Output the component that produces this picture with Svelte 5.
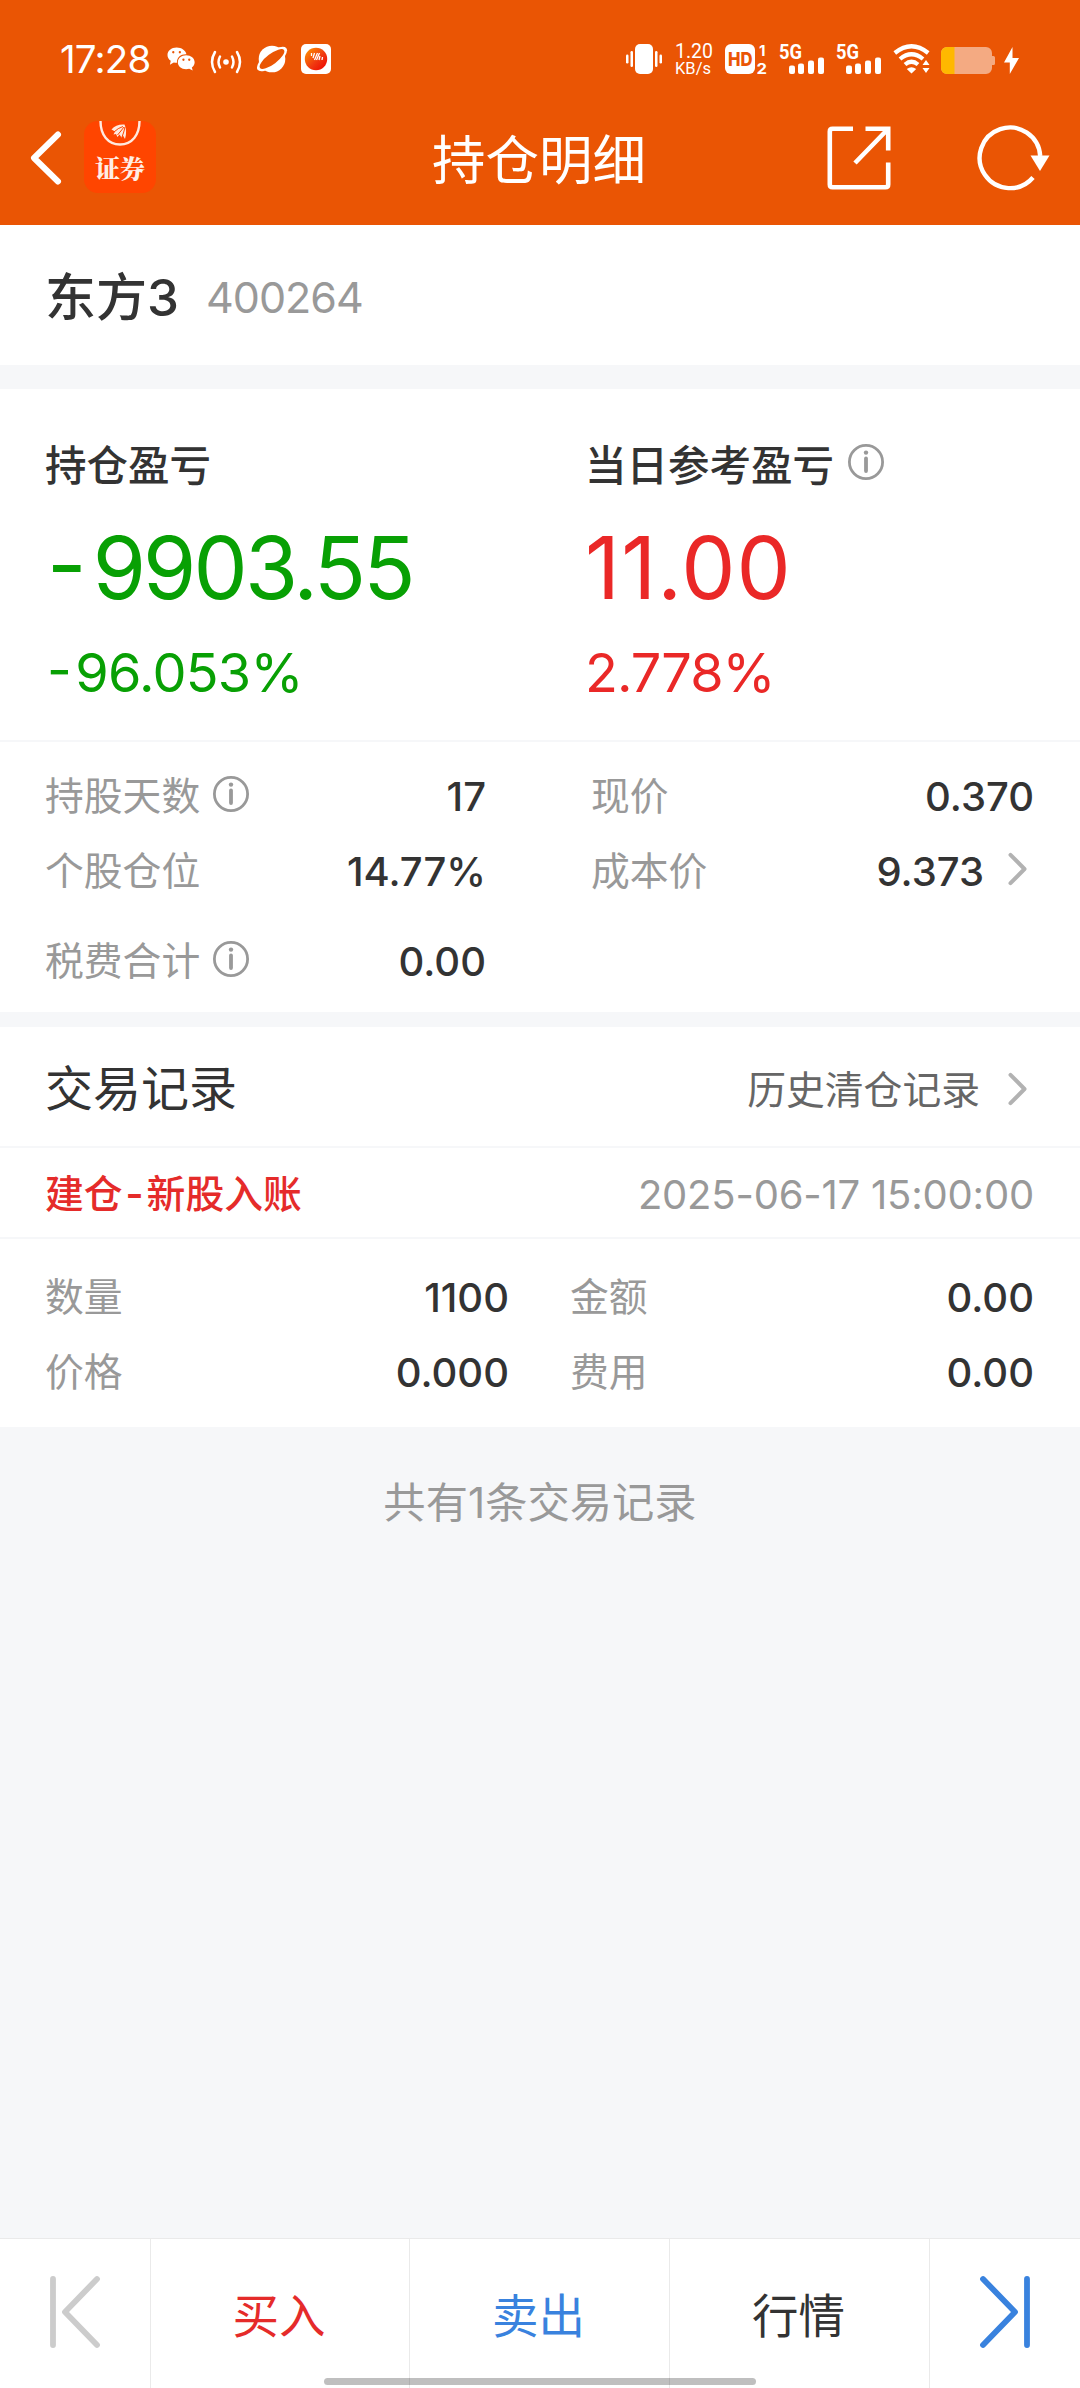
<script>
  const profits = [
    { title: '持仓盈亏', value: '-9903.55', pct: '-96.053%', tone: 'down' },
    { title: '当日参考盈亏', value: '11.00', pct: '2.778%', tone: 'up', info: true }
  ];
  const leftDetails = [
    { label: '持股天数', value: '17', info: true },
    { label: '个股仓位', value: '14.77%' },
    { label: '税费合计', value: '0.00', info: true }
  ];
  const rightDetails = [
    { label: '现价', value: '0.370' },
    { label: '成本价', value: '9.373', more: true }
  ];
  const record = [
    { label: '数量', value: '1100' },
    { label: '金额', value: '0.00' },
    { label: '价格', value: '0.000' },
    { label: '费用', value: '0.00' }
  ];
</script>

{#snippet infoIcon()}
  <svg class="info" width="38" height="38" viewBox="0 0 38 38">
    <circle cx="19" cy="19" r="16.6" fill="none" stroke="#999" stroke-width="2.8" />
    <circle cx="19" cy="9.6" r="2.2" fill="#999" />
    <path d="M19 15.5V28" stroke="#999" stroke-width="3.8" stroke-linecap="round" />
  </svg>
{/snippet}

{#snippet more()}
  <svg class="more" width="20" height="34" viewBox="0 0 20 34">
    <path d="M2.5 2.8L16.500 17L2.5 31.2" fill="none" stroke="#b2b2b2" stroke-width="4" stroke-linecap="round" stroke-linejoin="round" />
  </svg>
{/snippet}

{#snippet signed(text)}
  {#if text.startsWith('-')}<span class="sign">-</span>{text.slice(1)}{:else}{text}{/if}
{/snippet}

{#snippet signal()}
  <svg width="46" height="32" viewBox="0 0 46 32">
    <text x="0" y="15.500" class="g5" textLength="23" lengthAdjust="spacingAndGlyphs">5G</text>
    <g fill="#fff">
      <rect x="10" y="22.500" width="6" height="8.500" rx="2" />
      <rect x="19" y="20.500" width="6" height="10.500" rx="2" />
      <rect x="29" y="17.500" width="6" height="13.500" rx="2" />
      <rect x="39" y="14.500" width="6" height="16.500" rx="2" />
    </g>
  </svg>
{/snippet}

<div class="screen">
  <header>
    <div class="status">
      <span class="clock">17:28</span>
      <svg class="wechat" width="29" height="26" viewBox="0 0 30 26">
        <path fill="#fff" d="M10 1C4.500 1 .5 4.400.5 8.800c0 2.500 1.300 4.600 3.400 6L3 19l4-2.500c1 .3 2.200.4 3.300.4C10 11.500 14 8 19.500 8h.6C19.300 4 15 1 10 1z" />
        <path fill="#fff" d="M19.800 9c-5 0-8.600 3.300-8.600 7.300s3.600 7.200 8.600 7.200c1.100 0 2.200-.2 3.200-.5l3.600 2-.9-3.300c1.800-1.300 2.900-3.200 2.900-5.400 0-4-3.800-7.300-8.800-7.300z" />
        <g fill="#ea5504"><circle cx="6.500" cy="6" r="1.200" /><circle cx="13.300" cy="6" r="1.200" /><circle cx="17" cy="13.800" r="1.200" /><circle cx="23" cy="13.800" r="1.200" /></g>
      </svg>
      <svg class="cast" width="32" height="24" viewBox="0 0 32 24">
        <circle cx="16" cy="12" r="2.800" fill="#fff" />
        <path d="M10 6.500Q7 12 10 17.500M22 6.500Q25 12 22 17.500M5 2Q-1 12 5 22M27 2Q33 12 27 22" fill="none" stroke="#fff" stroke-width="2.500" stroke-linecap="round" />
      </svg>
      <svg class="planet" width="32" height="28" viewBox="0 0 32 28">
        <circle cx="16" cy="14" r="13.300" fill="#fff" />
        <ellipse cx="16" cy="14" rx="18" ry="7.200" transform="rotate(-37 16 14)" fill="#fff" />
        <ellipse cx="16" cy="14" rx="15" ry="5.200" transform="rotate(-37 16 14)" fill="#ea5504" />
      </svg>
      <svg class="badge" width="30" height="30" viewBox="0 0 30 30">
        <defs><linearGradient id="ball" x1="0" y1="0" x2="1" y2="1"><stop offset="0" stop-color="#f90" /><stop offset=".55" stop-color="#f03a10" /><stop offset="1" stop-color="#e00" /></linearGradient></defs>
        <rect width="30" height="30" rx="5" fill="#fff" />
        <circle cx="15" cy="15" r="11.200" fill="url(#ball)" />
        <path d="M10.500 9v3M13.500 9l-1.500 5M16.500 9l-3 7M18.500 9l-3 7M19 12l-1 4M21.500 13l-.5 3" stroke="#fff" stroke-width="1.300" />
      </svg>
      <span class="grow"></span>
      <svg class="vib" width="36" height="30" viewBox="0 0 36 30" fill="#fff">
        <rect x="9" width="18" height="30" rx="5" />
        <rect x="4.500" y="7" width="2.500" height="16" rx="1.200" /><rect x="0" y="10.500" width="2.500" height="9" rx="1.200" />
        <rect x="29" y="7" width="2.500" height="16" rx="1.200" /><rect x="33.500" y="10.500" width="2.500" height="9" rx="1.200" />
      </svg>
      <span class="rate"><b>1.20</b><b>KB/s</b></span>
      <svg class="hd" width="42" height="30" viewBox="0 0 42 30">
        <rect width="30" height="30" rx="6" fill="#fff" />
        <text x="3" y="21.800" class="hdt" textLength="24.500" lengthAdjust="spacingAndGlyphs">HD</text>
        <text x="34" y="11.500" class="sim">1</text>
        <text x="31.500" y="29.500" class="sim" textLength="10.500" lengthAdjust="spacingAndGlyphs">2</text>
      </svg>
      <span class="sig">{@render signal()}</span>
      <span class="sig two">{@render signal()}</span>
      <svg class="wifi" width="38" height="30" viewBox="0 0 38 30">
        <path d="M1.800 9Q18.500-4.500 35.200 9M7 15Q18.500 5.500 30 15M12 20.500Q18.500 15 25 20.500" fill="none" stroke="#fff" stroke-width="4.200" />
        <path d="M18.500 29.500L13.800 25Q18.500 21.500 23.200 25zM33 16l3.500 5h-7zM33 29l3.500-5h-7z" fill="#fff" />
      </svg>
      <svg class="bat" width="54" height="27" viewBox="0 0 54 27">
        <path d="M6 0H45a6 6 0 0 1 6 6V9h1.500q1.500 0 1.500 1.500v6q0 1.500-1.500 1.500H51v3a6 6 0 0 1-6 6H6a6 6 0 0 1-6-6V6a6 6 0 0 1 6-6z" fill="#f4aa82" />
        <path d="M6 0h7.500v27H6a6 6 0 0 1-6-6V6a6 6 0 0 1 6-6z" fill="#ffb800" />
      </svg>
      <svg class="bolt" width="15" height="27" viewBox="0 0 15 27"><path d="M8.500 0L0 15.500H5.800V27L15 11H8.500z" fill="#fff" /></svg>
    </div>

    <div class="nav">
      <div class="side">
        <svg class="back" width="32" height="54" viewBox="0 0 32 54"><path d="M28 3.500L4 27L28 50.500" fill="none" stroke="#fff" stroke-width="6" stroke-linecap="round" stroke-linejoin="round" /></svg>
        <div class="logo">
          <svg width="72" height="28" viewBox="0 0 72 28">
            <path d="M16.500 0C16.500 14 24 23.500 36 23.500S55.500 14 55.500 0" fill="none" stroke="#ffe9df" stroke-width="2.400" />
            <path d="M27.500 8.500Q32 3 40.500 3.500Q43.500 10 41 18L39 14.500L37.500 16.500L35.500 13.500L33.500 16L32 13L29.500 13.500L31 10.500z" fill="#ffe9df" />
            <path d="M30 11Q34 7 39 5.500M33.500 14Q37 10 40 6M38 16Q40 11 41 6" fill="none" stroke="#ff4500" stroke-width="1" />
          </svg>
          <span>证券</span>
        </div>
      </div>
      <h1>持仓明细</h1>
      <div class="side right">
        <svg width="64" height="64" viewBox="0 0 64 64" fill="none" stroke="#fff" stroke-width="4.600">
          <path d="M26 2.800H5.500Q2.800 2.800 2.800 5.500V58.500Q2.800 61.200 5.500 61.200H58.500Q61.200 61.200 61.200 58.500V36.500M38.500 2.800H61.200V24.500M60.500 3.500L28 37" />
        </svg>
        <svg class="refresh" width="72" height="66" viewBox="0 0 72 66">
          <path d="M55 52.500A30.300 30.300 0 1 1 62.200 31" fill="none" stroke="#fff" stroke-width="4.400" />
          <path d="M52.500 30.500H71.500L62 46z" fill="#fff" />
        </svg>
      </div>
    </div>
  </header>

  <section class="stock"><strong>东方<span class="num">3</span></strong><span class="num code">400264</span></section>

  <section class="profit">
    {#each profits as p}
      <div class="col {p.tone}">
        <h2>{p.title}{#if p.info}{@render infoIcon()}{/if}</h2>
        <div class="num big">{@render signed(p.value)}</div>
        <div class="num pct">{@render signed(p.pct)}</div>
      </div>
    {/each}
  </section>

  <section class="details">
    <div class="list left">
      {#each leftDetails as d}
        <div class="row"><span class="label">{d.label}</span>{#if d.info}{@render infoIcon()}{/if}<span class="num val">{d.value}</span></div>
      {/each}
    </div>
    <div class="list">
      {#each rightDetails as d}
        <div class="row"><span class="label">{d.label}</span><span class="num val">{d.value}</span>{#if d.more}{@render more()}{/if}</div>
      {/each}
    </div>
  </section>

  <section class="records">
    <div class="head"><h3>交易记录</h3><span class="history">历史清仓记录</span>{@render more()}</div>
    <div class="entry"><strong>建仓<span class="num dash">-</span>新股入账</strong><time class="num">2025-06-17 15:00:00</time></div>
    <div class="grid">
      {#each record as r}
        <div class="row"><span class="label">{r.label}</span><span class="num val">{r.value}</span></div>
      {/each}
    </div>
  </section>

  <p class="total">共有<span class="num">1</span>条交易记录</p>

  <footer>
    <div class="step"><svg width="52" height="74" viewBox="0 0 52 74" fill="none" stroke="#ccc" stroke-width="5.800" stroke-linecap="round" stroke-linejoin="round"><path d="M4 4V70M48 4L16 37L48 70" /></svg></div>
    <button class="buy">买入</button>
    <button class="sell">卖出</button>
    <button>行情</button>
    <div class="step"><svg width="52" height="74" viewBox="0 0 52 74" fill="none" stroke="#3982de" stroke-width="5.800" stroke-linecap="round" stroke-linejoin="round"><path d="M48 4V70M4 4L36 37L4 70" /></svg></div>
    <i class="home"></i>
  </footer>
</div>

<style>
  :global(body) { margin: 0; }
  .screen {
    box-sizing: border-box;
    width: 1080px;
    height: 2388px;
    display: flex;
    flex-direction: column;
    overflow: hidden;
    background: #f6f7f9;
    color: #333;
    font-family: 'Noto Sans CJK SC', sans-serif;
  }
  h1, h2, h3, p { margin: 0; font-weight: 400; }
  svg { flex: none; display: block; overflow: visible; }
  section { background: #fff; box-sizing: border-box; flex: none; }
  .num { font-family: Inter, Roboto, sans-serif; }

  header { height: 225px; background: #ea5504; color: #fff; flex: none; }
  .status { height: 90px; padding: 28px 61px 0 60px; box-sizing: border-box; display: flex; align-items: center; }
  .clock { font: 400 38.500px/46px Inter, sans-serif; width: 107px; letter-spacing: -0.800px; }
  .wechat { margin-right: 14px; }
  .cast { margin: 6px 14px 0 0; }
  .planet { margin-right: 13px; }
  .grow { flex: 1; }
  .rate { width: 38px; margin: 0 12px 0 13px; }
  .rate b { display: block; font: 400 19.500px/18px Roboto, sans-serif; white-space: nowrap; }
  .rate b + b { font-size: 16.500px; line-height: 15px; }
  .g5 { font: 700 20px Roboto, sans-serif; fill: #fff; }
  .hdt { font: 800 19px Inter, sans-serif; fill: #ea5504; }
  .sim { font: 700 15px Inter, sans-serif; fill: #fff; }
  .sig { margin-left: 12px; }
  .sig.two { margin-left: 11px; }
  .wifi { margin-left: 11px; }
  .bat { margin: 3px 9px 0 10px; }
  .bolt { margin-top: 2px; }

  .nav { height: 135px; padding: 0 30px; display: flex; align-items: center; }
  .side { flex: 1; display: flex; align-items: center; height: 135px; }
  .logo { width: 72px; height: 72px; border-radius: 14px; background: #ff4500; margin: -1px 0 0 22px; display: flex; flex-direction: column; align-items: center; }
  .logo span { font: 900 25px/36px 'Noto Serif CJK SC', 'Noto Sans CJK SC', sans-serif; color: #ffeee6; }
  h1 { font-size: 53.500px; line-height: 80px; margin: -1px 2px 0 0; }
  .right { justify-content: flex-end; gap: 87px; }

  .stock { height: 140px; margin-bottom: 24px; padding: 0 45px; display: flex; align-items: center; }
  .stock strong { font-weight: 500; font-size: 51px; line-height: 76px; padding-top: 2px; }
  .stock strong .num { font-size: 51px; letter-spacing: -2px; }
  .code { font-size: 43px; color: #999; margin-left: 29px; padding-top: 4px; letter-spacing: -1px; }

  .profit { height: 353px; padding: 44px 45px 0; display: grid; grid-template-columns: 540px 1fr; border-bottom: 2px solid #f6f7f9; }
  h2 { font-weight: 500; font-size: 41.500px; line-height: 60px; height: 60px; display: flex; align-items: center; gap: 13px; }
  h2 .info { margin-top: -2px; }
  .big { font-size: 86px; line-height: 90px; margin-top: 30px; }
  .pct { font-size: 54px; line-height: 60px; margin-top: 30px; }
  .down .num { color: #08a004; }
  .up .num { color: #ea2827; }
  .big .sign { margin-right: 9px; position: relative; top: -4px; }
  .pct .sign { margin-right: 4px; position: relative; top: -3px; }
  .down .big { padding-left: 2px; letter-spacing: -2.900px; }
  .down .pct { padding-left: 2px; letter-spacing: -0.700px; }
  .up .big { letter-spacing: 1.200px; }
  .up .pct { letter-spacing: -1px; }

  .details { height: 270px; margin-bottom: 15px; padding: 16px 46px 0 45px; display: grid; grid-template-columns: 441px 443px; gap: 105px; }
  .row { height: 75px; display: flex; align-items: center; }
  .left .row:nth-child(3) { margin-top: 15px; }
  .label { font-size: 38.800px; color: #999; padding-bottom: 6px; }
  .row .info { margin: -3px 0 0 12px; }
  .val { font-size: 40px; font-weight: 500; margin-left: auto; padding-top: 1px; }
  .row .more { margin: -3px 6px 0 24px; }

  .records { height: 400px; }
  .head { height: 121px; box-sizing: border-box; padding: 0 52px 0 45px; display: flex; align-items: center; border-bottom: 2px solid #f6f7f9; }
  .head .more { margin-top: 4px; }
  h3 { font-size: 48px; flex: 1; padding-bottom: 4px; }
  .history { color: #666; font-size: 38.800px; margin-right: 28px; }
  .entry { height: 91px; box-sizing: border-box; padding: 0 46px 0 45px; display: flex; align-items: center; justify-content: space-between; border-bottom: 2px solid #f6f7f9; }
  .entry strong { font-weight: 500; font-size: 38.800px; line-height: 56px; color: #e52b2a; }
  .dash { display: inline-block; width: 24px; text-align: center; font-weight: 600; }
  time { font-size: 40px; color: #999; padding-top: 4px; letter-spacing: -0.200px; }
  .grid { padding: 20px 46px 0 45px; display: grid; grid-template-columns: 464px 464px; column-gap: 61px; }
  .grid .val { padding-top: 2px; }

  .total { flex: 1; padding-top: 43px; text-align: center; font-size: 42.300px; line-height: 60px; color: #999; }

  footer { position: relative; height: 150px; box-sizing: border-box; border-top: 1px solid #eaeaea; background: #fff; display: grid; grid-template-columns: 151px 259px 260px 260px 150px; }
  footer > .step, footer > button { border: 0; border-right: 1px solid #eaeaea; background: none; box-sizing: border-box; display: flex; justify-content: center; padding: 0; font: 400 46.500px/60px 'Noto Sans CJK SC', sans-serif; color: #333; }
  footer > .step { padding-top: 36px; }
  footer > .step:nth-of-type(2) { border: 0; }
  footer > button { padding: 44px 2px 0 0; align-items: flex-start; }
  footer > .buy { color: #e52b2a; }
  footer > .sell { color: #3982de; }
  .home { position: absolute; left: 324px; top: 139px; width: 432px; height: 7px; border-radius: 4px; background: rgba(0, 0, 0, 0.25); }
</style>
